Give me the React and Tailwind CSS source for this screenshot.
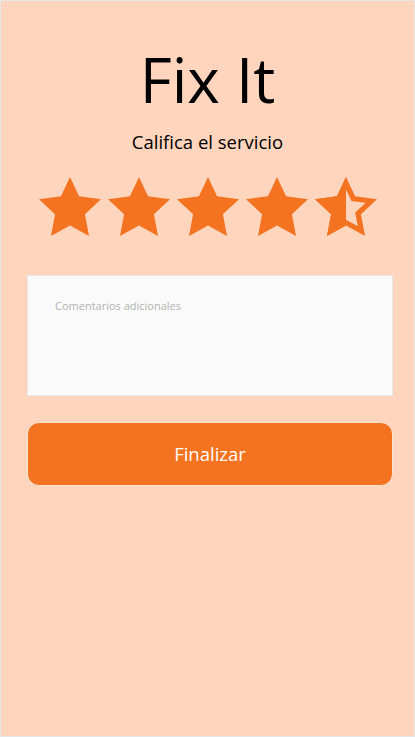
import React from "react";

const STAR = "12,1.6 15.09,8.26 22.6,9.27 17.1,14.5 18.5,22 12,18.4 5.5,22 6.9,14.5 1.4,9.27 8.91,8.26";
const VB = "1.4 1.6 21.2 20.4";

function Star({ half }) {
  if (!half) {
    return (
      <svg viewBox={VB} preserveAspectRatio="none" className="w-[62px] h-[59px]">
        <polygon points={STAR} fill="#F37321" />
      </svg>
    );
  }
  return (
    <svg viewBox={VB} preserveAspectRatio="none" className="w-[62px] h-[59px]">
      <defs>
        <clipPath id="starclip">
          <polygon points={STAR} />
        </clipPath>
        <clipPath id="lefthalf">
          <rect x="0" y="0" width="12" height="24" />
        </clipPath>
      </defs>
      <polygon points={STAR} fill="#F37321" clipPath="url(#lefthalf)" />
      <g clipPath="url(#starclip)">
        <polygon points={STAR} fill="none" stroke="#F37321" strokeWidth="3.6" strokeLinejoin="miter" />
      </g>
    </svg>
  );
}

export default function App() {
  return (
    <div
      className="w-[415px] h-[737px] bg-[#FFD5BD] border border-[#e6e6e6] flex flex-col items-center"
      style={{ fontFamily: '"Open Sans", "Noto Sans", sans-serif' }}
    >
      <h1 className="mt-[38px] text-[62px] leading-[80px] text-black">Fix It</h1>
      <p className="mt-[11px] text-[18.5px] leading-[24px] text-black">Califica el servicio</p>
      <div className="mt-[23px] flex gap-[7px]">
        <Star />
        <Star />
        <Star />
        <Star />
        <Star half />
      </div>
      <div className="self-start ml-[26px] mt-[39px] w-[366px] h-[121px] bg-[#FAFAFA] border border-[#e8e8e8] pl-[27px] pt-[22px]">
        <span className="block text-[11px] leading-[15px] text-[#b3b3b3]">Comentarios adicionales</span>
      </div>
      <button className="self-start ml-[26px] mt-[26px] w-[366px] h-[64px] rounded-[12px] bg-[#F37321] border border-[#fbe3d3] text-white text-[18.5px]">
        Finalizar
      </button>
    </div>
  );
}
